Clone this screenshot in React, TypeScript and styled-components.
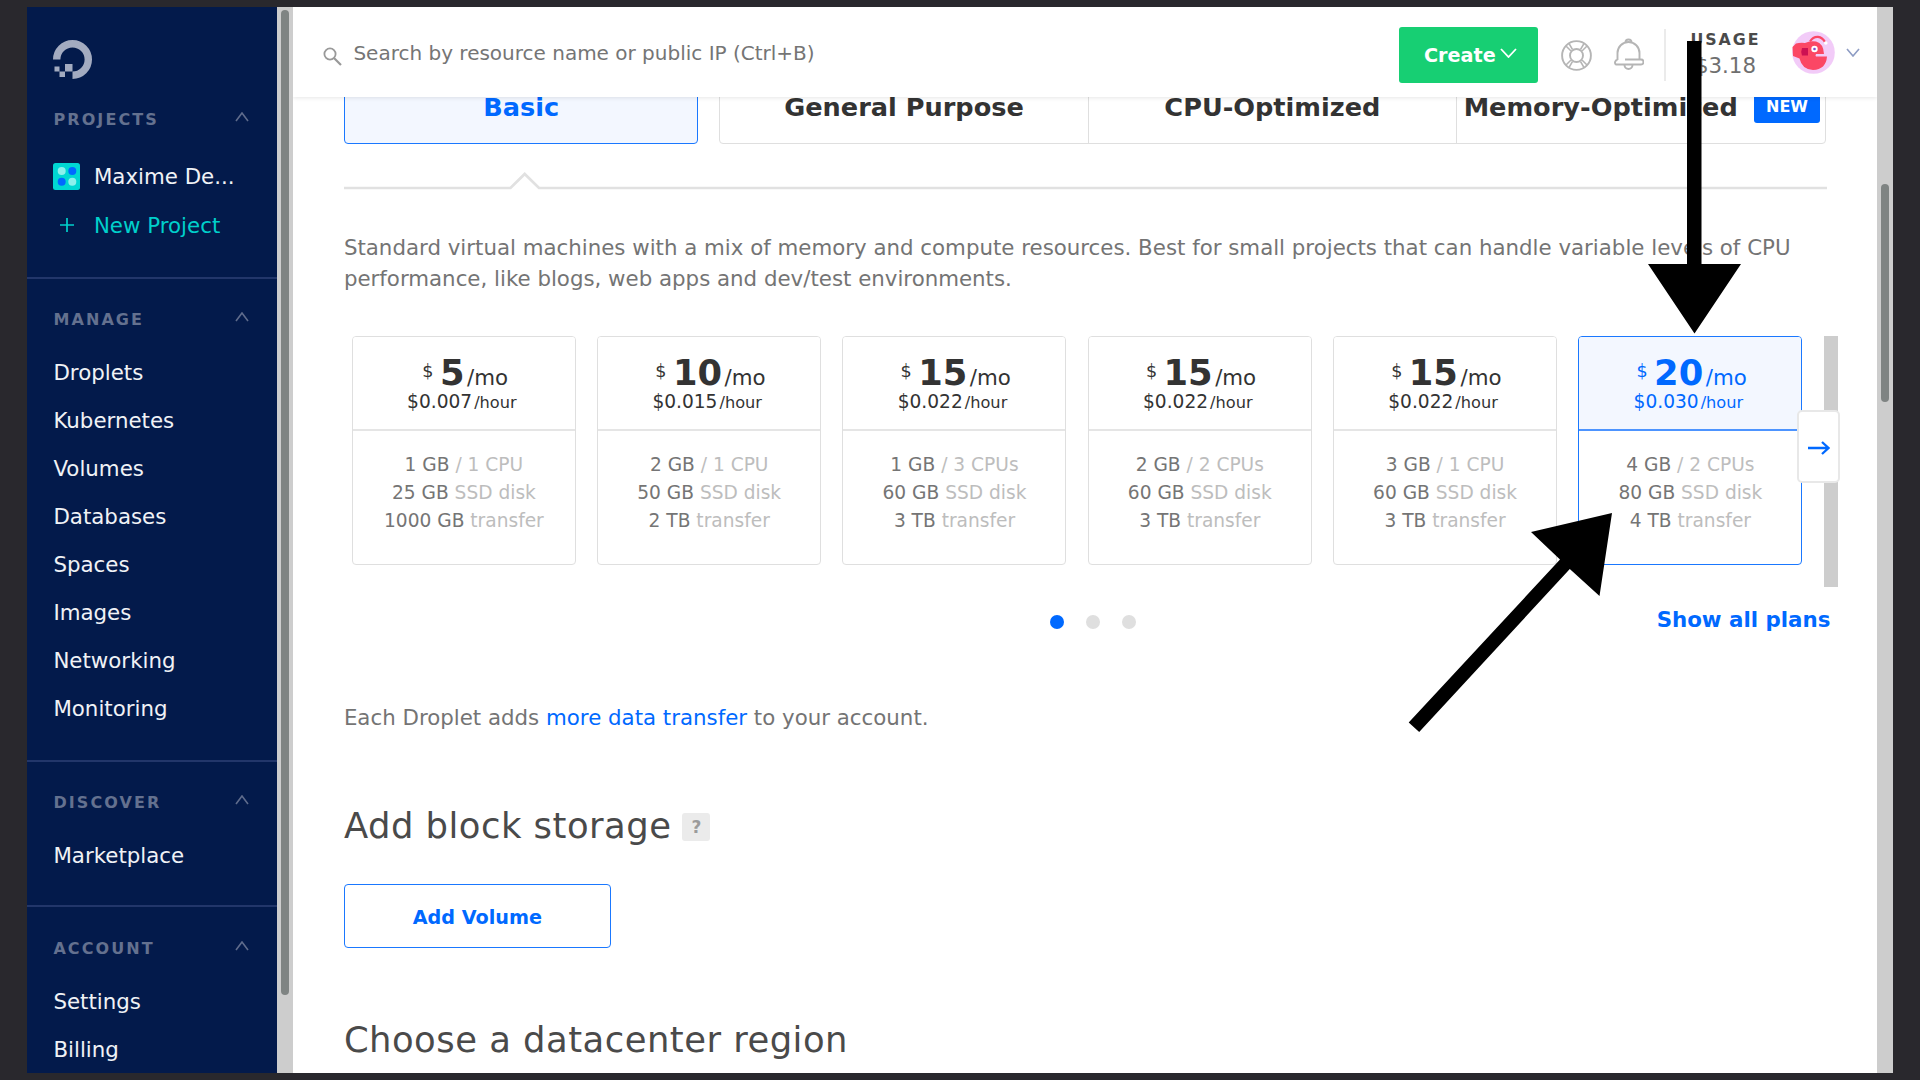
import React from "react";
import styled, { createGlobalStyle, css } from "styled-components";

const BLUE = "#0069ff";
const LINE = "#dfdfdf";

const GlobalStyle = createGlobalStyle`
  * { box-sizing: border-box; }
  body {
    margin: 0;
    overflow: hidden;
    background: #29282d;
    font-family: "DejaVu Sans", Verdana, sans-serif;
    -webkit-font-smoothing: antialiased;
  }
`;

const Frame = styled.div`
  position: relative;
  display: flex;
  width: 1920px;
  height: 1080px;
  padding: 7px 27px;
  overflow: hidden;
  background: #29282d;
`;

const Sidebar = styled.nav`
  width: 250.4px;
  height: 1066px;
  overflow: hidden;
  background: #031a4b;
  flex: none;
`;

const Track = styled.div<{ $top: number }>`
  width: 16px;
  height: 1066px;
  padding: ${(p) => p.$top}px 4px 0;
  background: #cdcdcd;
  flex: none;
`;

const Thumb = styled.div<{ $length: number }>`
  height: ${(p) => p.$length}px;
  border-radius: 4px;
  background: #7f8483;
`;

const Logo = styled.svg`
  display: block;
  width: 39px;
  height: 39px;
  margin: 33px 0 0 26.3px;
`;

const Section = styled.section<{ $top: number; $bottom: number; $first?: boolean }>`
  padding: ${(p) => p.$top}px 28px ${(p) => p.$bottom}px 26.4px;
  border-top: ${(p) => (p.$first ? "0" : "2px solid #22366a")};
`;

const SectionHead = styled.div`
  display: flex;
  justify-content: space-between;
  height: 32px;
  margin-bottom: 13px;
  color: #64718f;
  font-size: 16px;
  font-weight: 700;
  line-height: 32px;
  letter-spacing: 2.1px;
  svg { margin-top: 8px; }
`;

const NavItem = styled.a`
  display: block;
  height: 48px;
  color: #f0f2f6;
  font-size: 21.35px;
  line-height: 48px;
`;

const ProjectRow = styled.div<{ $accent?: boolean }>`
  display: flex;
  align-items: center;
  height: 49px;
  margin-top: ${(p) => (p.$accent ? 0 : 16)}px;
  color: ${(p) => (p.$accent ? "#00d0cb" : "#f0f2f6")};
  font-size: 21.35px;
  line-height: 49px;
  white-space: nowrap;
`;

const ProjectIcon = styled.span`
  display: flex;
  width: 27px;
  margin-right: 13.5px;
  justify-content: center;
`;

const Main = styled.main`
  display: flex;
  flex-direction: column;
  width: 1583.6px;
  height: 1066px;
  overflow: hidden;
  background: #fff;
`;

const TopBar = styled.header`
  position: relative;
  z-index: 1;
  display: flex;
  align-items: center;
  flex: none;
  height: 90px;
  padding: 0 16.5px 0 30px;
  background: #fff;
  box-shadow: 0 1px 4px rgba(0, 0, 0, 0.1);
`;

const SearchText = styled.span`
  flex: 1;
  margin: 2px 0 0 11px;
  color: #757575;
  font-size: 20px;
`;

const CreateButton = styled.button`
  display: flex;
  align-items: center;
  width: 139px;
  height: 56px;
  margin: 5px 23px 0 0;
  padding: 1px 0 0 25px;
  border: 0;
  border-radius: 3px;
  background: #17cf73;
  color: #fff;
  font: 700 19.2px "DejaVu Sans", sans-serif;
  svg { margin: -4px 0 0 4px; }
`;

const Rule = styled.div`
  width: 2.5px;
  height: 52px;
  margin: 6px 22px 0 20px;
  background: #ebebeb;
`;

const Usage = styled.div`
  display: flex;
  flex-direction: column;
  align-items: center;
  width: 74px;
  margin: 2.5px 30px 0 0;
  color: #6f6f6f;
  font-size: 21.35px;
  line-height: 27px;
`;

const UsageLabel = styled.span`
  color: #4a4a4a;
  font-size: 15.8px;
  font-weight: 700;
  line-height: 25px;
  letter-spacing: 2px;
`;

const Page = styled.div`
  display: flex;
  flex-direction: column;
  padding-left: 50.5px;
`;

const Tabs = styled.div`
  display: flex;
  height: 86px;
  margin-top: -39.5px;
  width: 1482.5px;
  gap: 21px;
`;

const TabGroup = styled.div`
  display: flex;
  flex: 1;
  border: 1px solid ${LINE};
  border-radius: 4px;
`;

const tabText = css`
  display: flex;
  align-items: center;
  justify-content: center;
  padding-top: 12px;
  font-size: 25.6px;
  font-weight: 700;
  white-space: nowrap;
`;

const ActiveTab = styled.div`
  ${tabText}
  width: 354.5px;
  border: 1px solid #1a78ff;
  border-radius: 4px;
  background: #f3f7ff;
  color: ${BLUE};
`;

const Tab = styled.div`
  ${tabText}
  flex: 1 1 0;
  color: #333;
  & + & { border-left: 1px solid ${LINE}; }
  &:last-child { padding-left: 1px; }
`;

const NewBadge = styled.span`
  height: 32px;
  margin: 0 0 0 16.5px;
  padding: 0 11.8px;
  border-radius: 3px;
  background: ${BLUE};
  color: #fff;
  font-size: 16px;
  line-height: 32px;
`;

const Pointer = styled.svg`
  display: block;
  width: 1483px;
  height: 20px;
  margin-top: 27px;
`;

const Paragraph = styled.p<{ $top: number }>`
  width: 1500px;
  margin: ${(p) => p.$top}px 0 0;
  color: #747474;
  font-size: 21.33px;
  line-height: 31px;
`;

const Link = styled.a`
  color: ${BLUE};
`;

const Carousel = styled.div`
  position: relative;
  display: flex;
  gap: 21.3px;
  width: 1494px;
  height: 251px;
  margin-top: 42px;
  padding-left: 8px;
`;

const Card = styled.article<{ $selected?: boolean }>`
  width: 224px;
  height: 229px;
  flex: none;
  border: 1px solid ${(p) => (p.$selected ? "#1a78ff" : LINE)};
  border-radius: 4px;
  text-align: center;
  white-space: nowrap;
`;

const PriceBox = styled.div<{ $selected?: boolean }>`
  display: flex;
  flex-direction: column;
  height: 94px;
  padding-top: 14px;
  border-bottom: 2px solid ${(p) => (p.$selected ? "#4d94ff" : "#e5e5e5")};
  border-radius: 3px 3px 0 0;
  background: ${(p) => (p.$selected ? "#f3f7ff" : "#fff")};
  color: ${(p) => (p.$selected ? BLUE : "#333")};
`;

const Monthly = styled.div`
  display: flex;
  align-items: baseline;
  justify-content: center;
  height: 44px;
  padding-left: 2.5px;
  font-size: 21.35px;
  line-height: 44px;
`;

const Currency = styled.span`
  align-self: flex-start;
  margin-right: 6.5px;
  font-size: 17.5px;
  line-height: 41px;
`;

const Amount = styled.b`
  margin-right: 2.5px;
  font-size: 35.3px;
`;

const Hourly = styled.div`
  height: 22px;
  margin: -4px 4px 0 0;
  font-size: 18.6px;
  line-height: 22px;
  small { margin-left: 2px; font-size: 16.2px; }
`;

const Specs = styled.div`
  padding-top: 20px;
  color: #bdbdbd;
  font-size: 18.6px;
  line-height: 28px;
  b { color: #757575; font-weight: 400; }
`;

const CarouselBar = styled.div`
  width: 14px;
  height: 251px;
  background: #cdcdcd;
  flex: none;
`;

const NextButton = styled.button`
  position: absolute;
  top: 74.5px;
  right: -2px;
  display: flex;
  align-items: center;
  justify-content: center;
  width: 43px;
  height: 73px;
  padding: 2px 0 0 1px;
  border: 2px solid #e8e8e8;
  border-radius: 5px;
  background: #fff;
`;

const CarouselFoot = styled.div`
  display: flex;
  align-items: center;
  width: 1486.5px;
  height: 32px;
  margin-top: 16.5px;
  color: ${BLUE};
  font-size: 21.35px;
  font-weight: 700;
`;

const Dots = styled.div`
  display: flex;
  gap: 22px;
  margin: 5px auto 0 706px;
`;

const Dot = styled.span<{ $on?: boolean }>`
  width: 14px;
  height: 14px;
  border-radius: 50%;
  background: ${(p) => (p.$on ? BLUE : "#dfdfdf")};
`;

const Heading = styled.h2<{ $top: number }>`
  display: flex;
  align-items: center;
  height: 46px;
  margin: ${(p) => p.$top}px 0 0;
  color: #4a4a4a;
  font-size: 35.4px;
  font-weight: 400;
  letter-spacing: 0.48px;
  white-space: nowrap;
`;

const HelpBadge = styled.span`
  width: 28px;
  height: 28px;
  margin: 4px 0 0 11px;
  border-radius: 3px;
  background: #ebebeb;
  color: #9b9b9b;
  font-size: 17px;
  font-weight: 700;
  line-height: 29px;
  letter-spacing: 0;
  text-align: center;
`;

const VolumeButton = styled.button`
  width: 267px;
  height: 64px;
  margin-top: 35.5px;
  padding: 3px 0 0;
  border: 1px solid #1a78ff;
  border-radius: 4px;
  background: #fff;
  color: ${BLUE};
  font: 700 19.2px "DejaVu Sans", sans-serif;
`;

const Annotations = styled.svg`
  position: absolute;
  z-index: 2;
  inset: 0;
  width: 1920px;
  height: 1080px;
  pointer-events: none;
`;

const SearchIcon = styled.svg`
  width: 19px;
  height: 19px;
  margin-top: 8px;
`;

const HelpIcon = styled.svg`
  width: 31px;
  height: 31px;
  margin-top: 6.5px;
`;

const BellIcon = styled.svg`
  width: 31px;
  height: 33px;
  margin: 5px 0 0 21px;
`;

const AvatarImage = styled.svg`
  width: 43px;
  height: 43px;
  margin: 0 11px 0 0;
`;

const Chevron = ({ up, color, w, h, weight = 1.6 }: { up?: boolean; color: string; w: number; h: number; weight?: number }) => (
  <svg width={w} height={h} viewBox={`0 0 ${w} ${h}`} fill="none" stroke={color} strokeWidth={weight}>
    <path d={up ? `M1 ${h - 1} L${w / 2} 1 L${w - 1} ${h - 1}` : `M1 1 L${w / 2} ${h - 1} L${w - 1} 1`} />
  </svg>
);

const Avatar = () => (
  <AvatarImage viewBox="0 0 43 43">
    <circle cx="21.5" cy="21.5" r="21.3" fill="#f2cbf8" />
    <path d="M0.500 16 L4 12.500 Q8 11.500 13 12 Q18 9.500 24 10.500 Q31.500 12.500 32 23 L24 23 Q23 24.500 24 25.500 L35 25.500 Q34 38.500 21 39 Q10 38.500 7.500 27.500 L1 25 Z" fill="#fb4765" />
    <path d="M18 10.500 Q21 5.500 26 5.800 Q30.500 6.300 33 11" fill="none" stroke="#fb4765" strokeWidth="2.200" />
    <circle cx="33.800" cy="12" r="1.800" fill="#fff" />
    <path d="M10 17h6v7.500h-6q-1.500-3.700 0-7.500z" fill="#cc1152" />
    <circle cx="22.500" cy="18" r="3.200" fill="#fff" />
    <circle cx="22.500" cy="18" r="1.300" fill="#7a4fd0" />
  </AvatarImage>
);

const plans = [
  { price: 5, hour: "0.007", ram: "1 GB", cpu: "1 CPU", disk: "25 GB", transfer: "1000 GB" },
  { price: 10, hour: "0.015", ram: "2 GB", cpu: "1 CPU", disk: "50 GB", transfer: "2 TB" },
  { price: 15, hour: "0.022", ram: "1 GB", cpu: "3 CPUs", disk: "60 GB", transfer: "3 TB" },
  { price: 15, hour: "0.022", ram: "2 GB", cpu: "2 CPUs", disk: "60 GB", transfer: "3 TB" },
  { price: 15, hour: "0.022", ram: "3 GB", cpu: "1 CPU", disk: "60 GB", transfer: "3 TB" },
  { price: 20, hour: "0.030", ram: "4 GB", cpu: "2 CPUs", disk: "80 GB", transfer: "4 TB", selected: true },
];

const sections = [
  { title: "MANAGE", top: 25.5, bottom: 26.5, items: ["Droplets", "Kubernetes", "Volumes", "Databases", "Spaces", "Images", "Networking", "Monitoring"] },
  { title: "DISCOVER", top: 25, bottom: 25, items: ["Marketplace"] },
  { title: "ACCOUNT", top: 26, bottom: 0, items: ["Settings", "Billing"] },
];

const Head = ({ title }: { title: string }) => (
  <SectionHead>
    {title}
    <Chevron up color="#5f6c8c" w={14} h={10} />
  </SectionHead>
);

export default function App() {
  return (
    <Frame>
      <GlobalStyle />
      <Sidebar>
        <Logo viewBox="0 0 39 39">
          <path d="M3.700 19.500 A15.800 15.800 0 1 1 19.500 35.300" fill="none" stroke="#a3abc0" strokeWidth="7.400" />
          <path d="M12 24h7.500v7.500H12z M6.500 31.500H12v5.500H6.500z M1.500 26.500h5v5h-5z" fill="#a3abc0" />
        </Logo>
        <Section $first $top={24.5} $bottom={27}>
          <Head title="PROJECTS" />
          <ProjectRow>
            <ProjectIcon>
              <svg width="27" height="27" viewBox="0 0 27 27">
                <rect width="27" height="27" rx="2.500" fill="#00d7d2" />
                <circle cx="8.700" cy="8" r="4" fill="#8cf0ec" />
                <circle cx="19.300" cy="8" r="4" fill="#0069ff" />
                <circle cx="8.700" cy="18.700" r="4" fill="#0069ff" />
                <circle cx="19.300" cy="18.700" r="4" fill="#8cf0ec" />
              </svg>
            </ProjectIcon>
            Maxime De...
          </ProjectRow>
          <ProjectRow $accent>
            <ProjectIcon>
              <svg width="14" height="14" viewBox="0 0 14 14" stroke="#00d0cb" strokeWidth="1.700">
                <path d="M7 0v14M0 7h14" />
              </svg>
            </ProjectIcon>
            New Project
          </ProjectRow>
        </Section>
        {sections.map((s) => (
          <Section key={s.title} $top={s.top} $bottom={s.bottom}>
            <Head title={s.title} />
            {s.items.map((item) => (
              <NavItem key={item}>{item}</NavItem>
            ))}
          </Section>
        ))}
      </Sidebar>
      <Track $top={3}>
        <Thumb $length={985} />
      </Track>
      <Main>
        <TopBar>
          <SearchIcon viewBox="0 0 19 19" fill="none" stroke="#999" strokeWidth="1.800">
            <circle cx="7" cy="7" r="5.600" />
            <path d="M11 11l7 7" strokeWidth="2.200" />
          </SearchIcon>
          <SearchText>Search by resource name or public IP (Ctrl+B)</SearchText>
          <CreateButton>
            Create
            <Chevron color="#fff" w={17} h={10} weight={1.8} />
          </CreateButton>
          <HelpIcon viewBox="0 0 31 31" fill="none" stroke="#b5b5b5" strokeWidth="1.900">
            <circle cx="15.500" cy="15.500" r="14.400" />
            <circle cx="15.500" cy="15.500" r="6.500" />
            <path d="M8 3.500l3.500 6M5 6l5 5M23 3.500l-3.500 6M26 6l-5 5M8 27.500l3.500-6M5 25l5-5M23 27.500l-3.500-6M26 25l-5-5" strokeWidth="1.500" />
          </HelpIcon>
          <BellIcon viewBox="0 0 31 33" fill="none" stroke="#b5b5b5" strokeWidth="1.900">
            <path d="M12.500 4.500a3 3 0 0 1 6 0" />
            <path d="M4.500 22V15a11 11 0 0 1 22 0v7" />
            <path d="M12 21.500H28a2.500 2.500 0 0 1 0 5H3a2.500 2.500 0 0 1 1.500-4.500" />
            <path d="M11.500 27a4 4 0 0 0 8 0" />
          </BellIcon>
          <Rule />
          <Usage>
            <UsageLabel>USAGE</UsageLabel>
            $3.18
          </Usage>
          <Avatar />
          <Chevron color="#8d9cc4" w={14} h={9} />
        </TopBar>
        <Page>
          <Tabs>
            <ActiveTab>Basic</ActiveTab>
            <TabGroup>
              <Tab>General Purpose</Tab>
              <Tab>CPU-Optimized</Tab>
              <Tab>
                Memory-Optimized <NewBadge>NEW</NewBadge>
              </Tab>
            </TabGroup>
          </Tabs>
          <Pointer viewBox="0 0 1483 20" fill="none" stroke="#e1e1e1" strokeWidth="2.700">
            <path d="M0 17h166.500L180.700 3 195 17H1483" />
          </Pointer>
          <Paragraph $top={41}>
            Standard virtual machines with a mix of memory and compute resources. Best for small projects that can handle variable levels of CPU
            performance, like blogs, web apps and dev/test environments.
          </Paragraph>
          <Carousel>
            {plans.map((p, i) => (
              <Card key={i} $selected={p.selected}>
                <PriceBox $selected={p.selected}>
                  <Monthly>
                    <Currency>$</Currency>
                    <Amount>{p.price}</Amount>/mo
                  </Monthly>
                  <Hourly>
                    ${p.hour}
                    <small>/hour</small>
                  </Hourly>
                </PriceBox>
                <Specs>
                  <div><b>{p.ram}</b> / {p.cpu}</div>
                  <div><b>{p.disk}</b> SSD disk</div>
                  <div><b>{p.transfer}</b> transfer</div>
                </Specs>
              </Card>
            ))}
            <CarouselBar />
            <NextButton>
              <svg width="22" height="14" viewBox="0 0 22 14" fill="none" stroke={BLUE} strokeWidth="2.300">
                <path d="M0 7h20M14 1l6.500 6-6.500 6" />
              </svg>
            </NextButton>
          </Carousel>
          <CarouselFoot>
            <Dots>
              <Dot $on />
              <Dot />
              <Dot />
            </Dots>
            Show all plans
          </CarouselFoot>
          <Paragraph $top={66.5}>
            Each Droplet adds <Link>more data transfer</Link> to your account.
          </Paragraph>
          <Heading $top={69.5}>
            Add block storage <HelpBadge>?</HelpBadge>
          </Heading>
          <VolumeButton>Add Volume</VolumeButton>
          <Heading $top={69}>Choose a datacenter region</Heading>
        </Page>
      </Main>
      <Track $top={177}>
        <Thumb $length={218} />
      </Track>
      <Annotations viewBox="0 0 1920 1080">
        <path d="M1687 41h14.500v223H1741l-46.500 69.500L1648 264h39z" />
        <path d="M1612 513l-12.500 83-29.700-27L1419.200 732l-10.500-9.500L1560 559.500 1531 532z" />
      </Annotations>
    </Frame>
  );
}
